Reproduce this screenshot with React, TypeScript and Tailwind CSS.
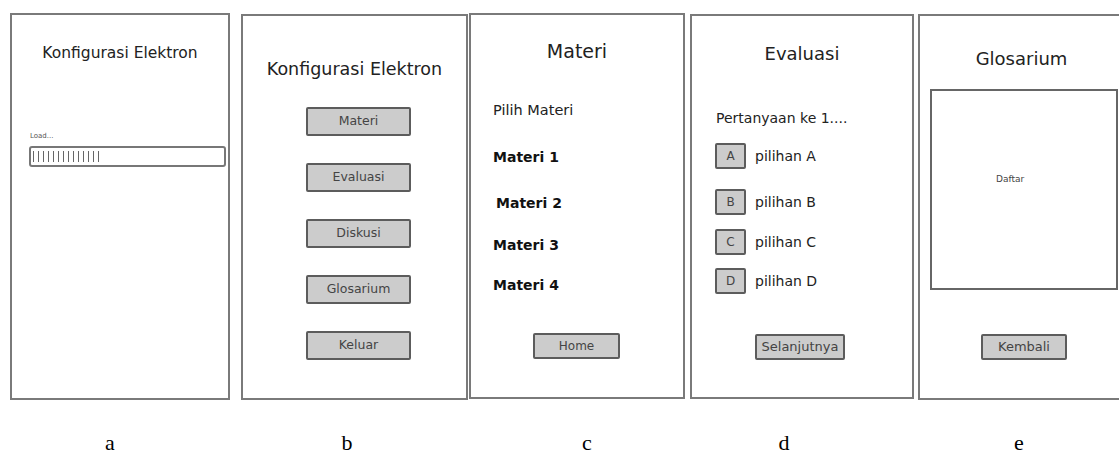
import React from "react";

const hand = { fontFamily: '"Comic Sans MS", "DejaVu Sans", sans-serif' };

function Btn({ label, className }: { label: string; className: string }) {
  return (
    <div
      className={`flex items-center justify-center rounded-[2px] border-2 border-[#5c5c5c] bg-[#cccccc] text-[#444] ${className}`}
    >
      {label}
    </div>
  );
}

function Splash() {
  return (
    <div className="mt-[13px] ml-[10px] flex h-[387px] w-[220px] shrink-0 flex-col border-2 border-[#7a7a7a]">
      <div className="mt-[27px] text-center text-[15.5px] text-[#222]">Konfigurasi Elektron</div>
      <div className="mt-[66px] ml-[18px] text-[7px] text-[#555]">Load...</div>
      <div className="mt-[4px] ml-[17px] mr-[2px] flex h-[21px] items-center rounded-[3px] border-2 border-[#777] px-[2px]">
        <div className="flex h-[11px] gap-[4px]">
          {Array.from({ length: 14 }).map((_, i) => (
            <div key={i} className="h-full w-px bg-[#666]" />
          ))}
        </div>
      </div>
    </div>
  );
}

function Menu() {
  const items = ["Materi", "Evaluasi", "Diskusi", "Glosarium", "Keluar"];
  return (
    <div className="mt-[14px] ml-[11px] flex h-[386px] w-[227px] shrink-0 flex-col border-2 border-[#7a7a7a]">
      <div className="mt-[40px] text-center text-[17.5px] text-[#222]">Konfigurasi Elektron</div>
      <div className="mt-[25px] flex flex-col gap-[27px] pl-[63px]">
        {items.map((t) => (
          <Btn key={t} label={t} className="h-[29px] w-[105px] text-[12.5px]" />
        ))}
      </div>
    </div>
  );
}

function Materi() {
  return (
    <div className="mt-[13px] ml-[1px] flex h-[386px] w-[216px] shrink-0 flex-col border-2 border-[#7a7a7a]">
      <div className="mt-[22px] text-center text-[19px] text-[#222]">Materi</div>
      <div className="mt-[34px] ml-[22px] text-[14.5px] text-[#222]">Pilih Materi</div>
      <div className="ml-[22px] flex flex-col text-[14px] font-bold text-[#111]">
        <div className="mt-[26px]">Materi 1</div>
        <div className="mt-[25px] ml-[3px]">Materi 2</div>
        <div className="mt-[21px]">Materi 3</div>
        <div className="mt-[19px]">Materi 4</div>
      </div>
      <Btn label="Home" className="mt-[37px] ml-[62px] h-[26px] w-[87px] text-[12px]" />
    </div>
  );
}

function Evaluasi() {
  const opts = [
    ["A", "pilihan A", "mt-[14px]"],
    ["B", "pilihan B", "mt-[20px]"],
    ["C", "pilihan C", "mt-[14px]"],
    ["D", "pilihan D", "mt-[13px]"],
  ];
  return (
    <div className="mt-[14px] ml-[5px] flex h-[385px] w-[224px] shrink-0 flex-col border-2 border-[#7a7a7a]">
      <div className="mt-[24px] text-center text-[18px] text-[#222]">Evaluasi</div>
      <div className="mt-[41px] ml-[24px] text-[14px] text-[#222]">Pertanyaan ke 1....</div>
      {opts.map(([k, t, m]) => (
        <div key={k} className={`ml-[23px] flex items-center ${m}`}>
          <Btn label={k} className="h-[26px] w-[31px] text-[12px]" />
          <span className="ml-[9px] text-[14px] text-[#222]">{t}</span>
        </div>
      ))}
      <Btn label="Selanjutnya" className="mt-[40px] ml-[63px] h-[26px] w-[90px] text-[13px]" />
    </div>
  );
}

function Glosarium() {
  return (
    <div className="mt-[14px] ml-[4px] flex h-[386px] w-[215px] shrink-0 flex-col border-2 border-[#7a7a7a]">
      <div className="mt-[29px] pr-[8px] text-center text-[18px] text-[#222]">Glosarium</div>
      <div className="mt-[17px] ml-[10px] h-[201px] w-[188px] border-2 border-[#666] pt-[82px] pl-[64px] text-[9px] text-[#444]">
        Daftar
      </div>
      <Btn label="Kembali" className="mt-[44px] ml-[61px] h-[26px] w-[86px] text-[13px]" />
    </div>
  );
}

export default function App() {
  const letters = [
    ["a", "ml-[100px]"],
    ["b", "ml-[217px]"],
    ["c", "ml-[220px]"],
    ["d", "ml-[177px]"],
    ["e", "ml-[215px]"],
  ];
  return (
    <div className="h-[455px] w-[1119px] overflow-hidden bg-white" style={hand}>
      <div className="flex items-start">
        <Splash />
        <Menu />
        <Materi />
        <Evaluasi />
        <Glosarium />
      </div>
      <div
        className="mt-[32px] flex text-[22px] leading-none text-black"
        style={{ fontFamily: '"Liberation Serif", serif' }}
      >
        {letters.map(([l, m]) => (
          <span key={l} className={`w-[20px] text-center ${m}`}>
            {l}
          </span>
        ))}
      </div>
    </div>
  );
}
